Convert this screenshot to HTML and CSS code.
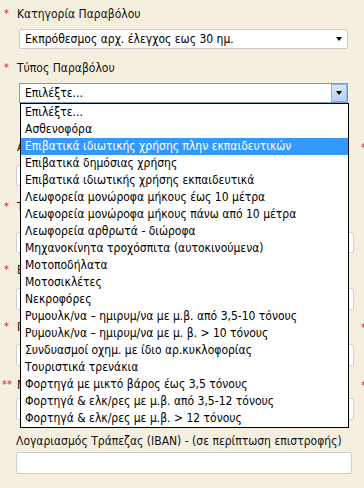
FILE: index.html
```html
<!DOCTYPE html>
<html lang="el">
<head>
<meta charset="utf-8">
<title>Παράβολο</title>
<link rel="stylesheet" href="styles.css">
</head>
<body>
<div class="page">
  <div class="row r1">
    <div class="field">
      <div class="label"><span class="req">*</span><span class="text">Κατηγορία Παραβόλου</span></div>
      <div class="select">
        <span class="val">Εκπρόθεσμος αρχ. έλεγχος εως 30 ημ.</span>
        <span class="arrow"></span>
      </div>
    </div>
    <div class="side"></div>
  </div>

  <div class="row r2">
    <div class="field">
      <div class="label"><span class="req">*</span><span class="text">Τύπος Παραβόλου</span></div>
      <div class="select open">
        <span class="val">Επιλέξτε...</span>
        <span class="btn"><span class="arrow"></span></span>
        <ul class="list">
          <li>Επιλέξτε...</li>
          <li>Ασθενοφόρα</li>
          <li class="sel">Επιβατικά ιδιωτικής χρήσης πλην εκπαιδευτικών</li>
          <li>Επιβατικά δημόσιας χρήσης</li>
          <li>Επιβατικά ιδιωτικής χρήσης εκπαιδευτικά</li>
          <li>Λεωφορεία μονώροφα μήκους έως 10 μέτρα</li>
          <li>Λεωφορεία μονώροφα μήκους πάνω από 10 μέτρα</li>
          <li>Λεωφορεία αρθρωτά - διώροφα</li>
          <li>Μηχανοκίνητα τροχόσπιτα (αυτοκινούμενα)</li>
          <li>Μοτοποδήλατα</li>
          <li>Μοτοσικλέτες</li>
          <li>Νεκροφόρες</li>
          <li>Ρυμουλκ/να – ημιρυμ/να με μ.β. από 3,5-10 τόνους</li>
          <li>Ρυμουλκ/να – ημιρυμ/να με μ. β. &gt; 10 τόνους</li>
          <li>Συνδυασμοί οχημ. με ίδιο αρ.κυκλοφορίας</li>
          <li>Τουριστικά τρενάκια</li>
          <li>Φορτηγά με μικτό βάρος έως 3,5 τόνους</li>
          <li>Φορτηγά &amp; ελκ/ρες με μ.β. από 3,5-12 τόνους</li>
          <li>Φορτηγά &amp; ελκ/ρες με μ.β. &gt; 12 τόνους</li>
        </ul>
      </div>
    </div>
    <div class="side"></div>
  </div>

  <div class="row r3">
    <div class="field">
      <div class="label"><span class="req"></span><span class="text">Αριθμός Κυκλοφορίας</span></div>
      <div class="input short"></div>
    </div>
    <div class="side"><span class="req">*</span></div>
  </div>

  <div class="row r4">
    <div class="field">
      <div class="label"><span class="req">*</span><span class="text">Τελευταίος έλεγχος</span></div>
      <div class="input"></div>
    </div>
    <div class="side"></div>
  </div>

  <div class="row r5">
    <div class="field">
      <div class="label"><span class="req">*</span><span class="text">Επώνυμο</span></div>
      <div class="input"></div>
    </div>
    <div class="side"></div>
  </div>

  <div class="row r6">
    <div class="field">
      <div class="label"><span class="req">*</span><span class="text">Πόλη</span></div>
      <div class="input"></div>
    </div>
    <div class="side"><span class="req">*</span></div>
  </div>

  <div class="row r7">
    <div class="field">
      <div class="label double"><span class="req">**</span><span class="text">Μητρώο</span></div>
      <div class="input"></div>
    </div>
    <div class="side"><span class="req">*</span></div>
  </div>

  <div class="row r8">
    <div class="field">
      <div class="label plain"><span class="text">Λογαριασμός Τράπεζας (IBAN) - (σε περίπτωση επιστροφής)</span></div>
      <div class="input iban"></div>
    </div>
    <div class="side"></div>
  </div>
</div>
</body>
</html>
```

FILE: styles.css
```css
html, body {
  margin: 0;
  padding: 0;
}
body {
  background: #f5efdf;
  font-family: "DejaVu Sans", sans-serif;
  font-stretch: condensed;
  font-size: 12px;
  color: #000;
  overflow: hidden;
  width: 364px;
  height: 488px;
}
.page {
  padding-top: 6px;
  width: 364px;
}
.row {
  display: grid;
  grid-template-columns: 361px 60px;
}
.side {
  font-size: 12px;
  line-height: 16px;
}
.side .req {
  color: #e0201c;
}
.label {
  display: flex;
  line-height: 16px;
  height: 16px;
  padding-left: 4px;
  white-space: nowrap;
}
.label.double {
  padding-left: 2px;
}
.label.double .req {
  width: 15px;
}
.label.plain {
  padding-left: 16px;
}
.req {
  color: #e0201c;
  font-size: 11px;
  width: 13px;
  flex: none;
}
.text {
  color: #111;
}
.select {
  position: relative;
  box-sizing: border-box;
  margin-left: 19px;
  width: 329px;
  height: 20px;
  background: #fff;
  border: 1px solid #c9c9c9;
  border-radius: 2px;
  display: flex;
  align-items: center;
  padding-left: 5px;
}
.val {
  flex: 1;
  white-space: nowrap;
}
.arrow {
  width: 0;
  height: 0;
  border-left: 3px solid transparent;
  border-right: 3px solid transparent;
  border-top: 4px solid #000;
  margin-right: 5px;
}
.select.open {
  border-color: #7f9db9;
  border-radius: 0;
}
.btn {
  box-sizing: border-box;
  width: 16px;
  height: 18px;
  border: 1px solid #8fb2d8;
  background: linear-gradient(#d6e7fb, #b5d3f3);
  display: flex;
  align-items: center;
  justify-content: center;
  margin-right: 0;
}
.btn .arrow {
  margin-right: 0;
}
.r1 .label { margin-bottom: 7px; }
.r1 { margin-bottom: 11px; }
.r2 .label { margin-bottom: 7px; }
.r2 { margin-bottom: 36px; }

.list {
  position: absolute;
  z-index: 5;
  top: 19px;
  left: 0;
  box-sizing: border-box;
  width: 329px;
  margin: 0;
  padding: 0;
  list-style: none;
  background: #fff;
  border: 1px solid #000;
}
.list li {
  height: 17px;
  line-height: 17px;
  padding-left: 4px;
  white-space: nowrap;
  color: #000;
}
.list li.sel {
  background: #3399ff;
  color: #fff;
}

.input {
  box-sizing: border-box;
  margin-left: 16px;
  width: 338px;
  height: 22px;
  background: #fff;
  border: 1px solid #cfcfcf;
  border-radius: 2px;
}
.input.short {
  width: 300px;
  height: 21px;
}
.input.iban {
  width: 336px;
}
.r3 .label { margin-bottom: 10px; }
.r3 { margin-bottom: 13px; }
.r4 .label { margin-bottom: 17px; }
.r4 .input { height: 21px; }
.r4 { margin-bottom: 9px; }
.r5 .label { margin-bottom: 10px; }
.r5 { margin-bottom: 9px; }
.r6 .label { margin-bottom: 9px; }
.r6 { margin-bottom: 11px; }
.r7 .label { margin-bottom: 5px; }
.r7 { margin-bottom: 13px; }
.r8 .label { margin-bottom: 3px; }
```
